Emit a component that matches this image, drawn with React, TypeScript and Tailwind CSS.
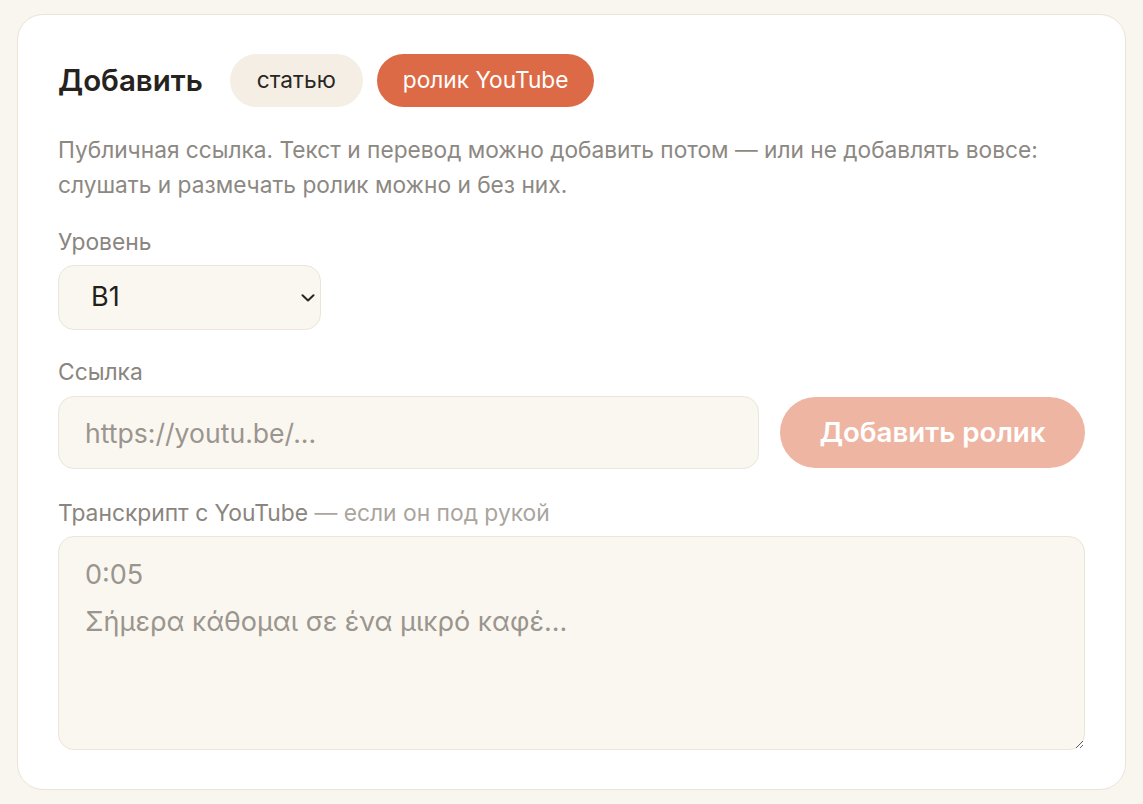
const FONT = "font-['Inter','Noto_Sans',sans-serif]";

function FieldLabel({ children }: { children: React.ReactNode }) {
  return (
    <div className="text-[22.8px] leading-[28px] text-[#8a857e]">{children}</div>
  );
}

export default function App() {
  return (
    <div className={`${FONT} min-h-screen bg-[#f9f6ef] px-[17px] pt-[14px] pb-[15px]`}>
      <div className="rounded-[26px] border border-[#ebe4d8] bg-white px-[40px] pt-[39px] pb-[39px]">
        <div className="flex items-center">
          <h1 className="mr-[27px] text-[29.5px] font-semibold text-[#26221e]">
            Добавить
          </h1>
          <button
            className="h-[53px] rounded-full bg-[#f4eee4] px-[27px] text-[22.7px] text-[#2a2622]"
            type="button"
          >
            статью
          </button>
          <button
            className="ml-[14px] h-[53px] rounded-full bg-[#dd6a46] px-[26px] text-[22.7px] text-white"
            type="button"
          >
            ролик YouTube
          </button>
        </div>

        <p className="mt-[25px] text-[22.7px] leading-[35px] text-[#8c8882]">
          Публичная ссылка. Текст и перевод можно добавить потом — или не
          добавлять вовсе: слушать и размечать ролик можно и без них.
        </p>

        <div className="mt-[26px]">
          <FieldLabel>Уровень</FieldLabel>
          <div className="relative mt-[9px] w-[263px]">
            <select
              className="h-[65px] w-full appearance-none rounded-[16px] border border-[#ece5d9] bg-[#faf7f0] pl-[32px] text-[27px] text-[#221f1b] outline-none"
              defaultValue="B1"
            >
              <option>A1</option>
              <option>A2</option>
              <option>B1</option>
              <option>B2</option>
              <option>C1</option>
            </select>
            <svg
              className="pointer-events-none absolute right-[6px] top-[29px] text-[#2a2622]"
              fill="none"
              height="8"
              viewBox="0 0 14 8"
              width="14"
            >
              <path
                d="M1.5 1.2l5.5 5.3 5.5-5.3"
                stroke="currentColor"
                strokeLinecap="round"
                strokeLinejoin="round"
                strokeWidth="2"
              />
            </svg>
          </div>
        </div>

        <div className="mt-[28px]">
          <FieldLabel>Ссылка</FieldLabel>
          <div className="mt-[10px] flex items-center gap-[21px]">
            <input
              className="h-[73px] flex-1 rounded-[16px] border border-[#ece5d9] bg-[#faf7f0] px-[26px] text-[26.6px] text-[#221f1b] outline-none placeholder:text-[#9a958e]"
              placeholder="https://youtu.be/..."
              type="text"
            />
            <button
              className="h-[71px] w-[305px] rounded-full bg-[#efb5a3] text-[27.7px] font-semibold text-white"
              type="button"
            >
              Добавить ролик
            </button>
          </div>
        </div>

        <div className="mt-[30px]">
          <FieldLabel>
            Транскрипт с YouTube{" "}
            <span className="text-[#aaa59e]">— если он под рукой</span>
          </FieldLabel>
          <textarea
            className="mt-[9px] block h-[214px] w-full rounded-[16px] border border-[#ece5d9] bg-[#faf7f0] px-[26px] pt-[14px] text-[27px] leading-[47px] text-[#221f1b] outline-none placeholder:text-[#9a958e]"
            placeholder={"0:05\nΣήμερα κάθομαι σε ένα μικρό καφέ..."}
          />
        </div>
      </div>
    </div>
  );
}
